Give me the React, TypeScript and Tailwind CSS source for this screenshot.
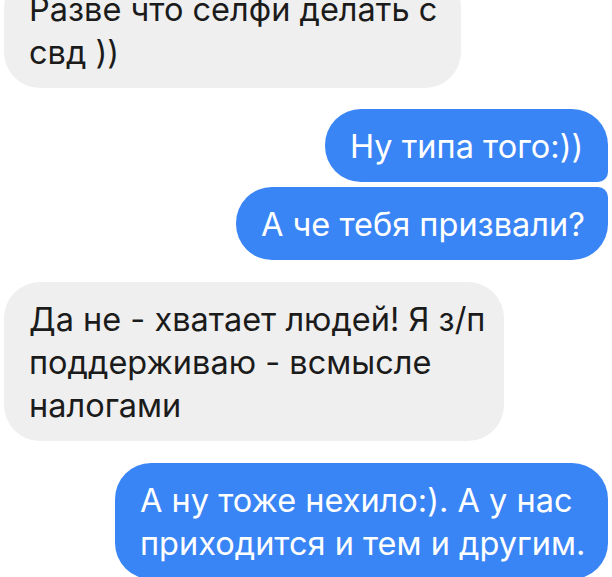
import React from 'react';

type Msg = {
  id: number;
  mine: boolean;
  lines: string[];
  box: string;
};

// width of each bubble is fixed so the line breaks match the screenshot
const messages: Msg[] = [
  { id: 1, mine: false, lines: ['Разве что селфи делать с', 'свд ))'], box: 'w-[457px] rounded-[36px]' },
  { id: 2, mine: true, lines: ['Ну типа того:))'], box: 'w-[283px] rounded-[36px] rounded-br-[10px] mt-[21px]' },
  { id: 3, mine: true, lines: ['А че тебя призвали?'], box: 'w-[372px] rounded-[36px] rounded-tr-[10px] mt-[5px]' },
  {
    id: 4,
    mine: false,
    lines: ['Да не - хватает людей! Я з/п', 'поддерживаю - всмысле', 'налогами'],
    box: 'w-[500px] rounded-[36px] mt-[22px]',
  },
  {
    id: 5,
    mine: true,
    lines: ['А ну тоже нехило:). А у нас', 'приходится и тем и другим.'],
    box: 'w-[493px] rounded-[36px] mt-[22px]',
  },
];

const Bubble: React.FC<{ msg: Msg }> = ({ msg }) => (
  <div className={`flex ${msg.mine ? 'justify-end' : 'justify-start'}`}>
    <div
      className={`${msg.box} pl-[25px] pt-[16px] pb-[14px] text-[32.5px] leading-[43px] whitespace-nowrap ${
        msg.mine ? 'bg-[#3a85f6] text-white' : 'bg-[#efefef] text-[#1b1b1b]'
      }`}
    >
      {msg.lines.map((line, i) => (
        <div key={i}>{line}</div>
      ))}
    </div>
  </div>
);

export default function App() {
  return (
    <div
      className="w-[612px] h-[577px] overflow-hidden bg-white"
      style={{ fontFamily: 'Inter, "Noto Sans", sans-serif' }}
    >
      <div className="flex flex-col px-[4px] -mt-[28px]">
        {messages.map(m => (
          <Bubble key={m.id} msg={m} />
        ))}
      </div>
    </div>
  );
}
